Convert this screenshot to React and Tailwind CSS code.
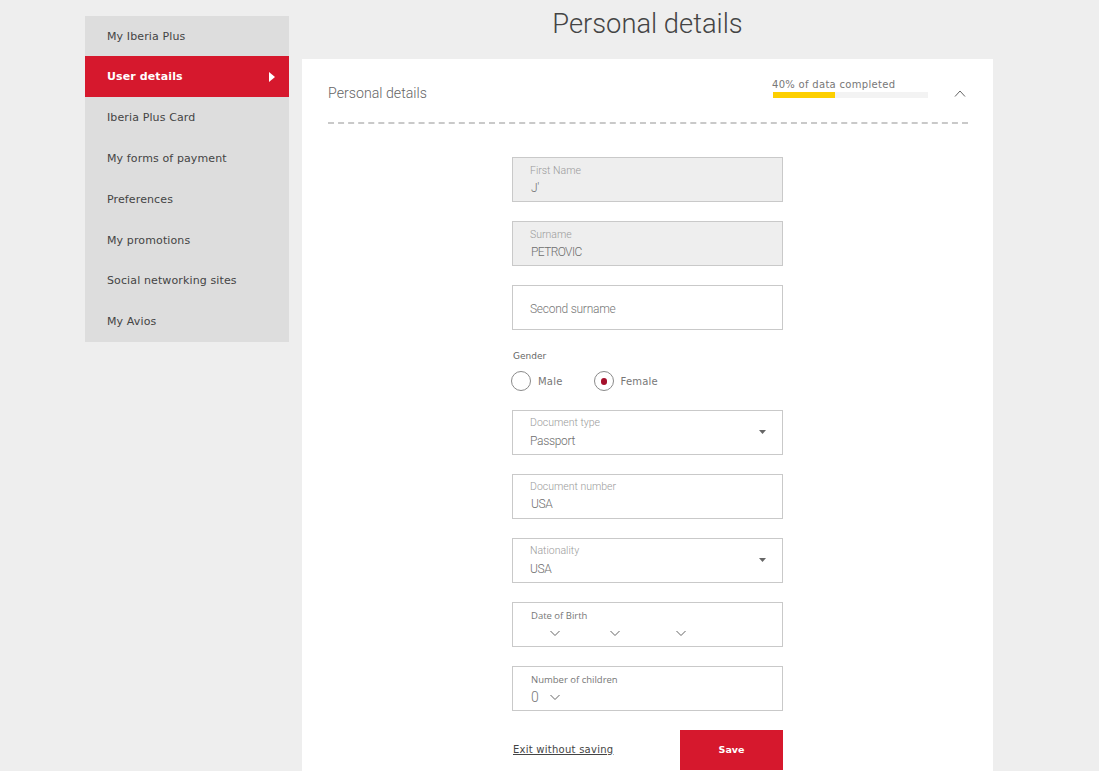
const sans = "font-['DejaVu_Sans',sans-serif]";
const open = "font-['Open_Sans',sans-serif]";
const light = "font-['Roboto',sans-serif] font-light";

const items = [
  ["My Iberia Plus", 40, false, "pt-[2px]"],
  ["User details", 41, true, "pt-[1px]"],
  ["Iberia Plus Card", 41, false, "pt-[1px]"],
  ["My forms of payment", 41, false, "pt-[1px]"],
  ["Preferences", 41, false, "pt-[1px]"],
  ["My promotions", 41, false, "pt-[1px]"],
  ["Social networking sites", 40, false, "pt-[1px]"],
  ["My Avios", 41, false, "pt-[1px]"],
];

function Chevron({ up, className = "" }) {
  return (
    <svg width="12" height="7" viewBox="0 0 12 7" fill="none" className={className}>
      <path d={up ? "M1 6.5 L6 1 L11 6.5" : "M1.5 1 L6 5.5 L10.5 1"} stroke="#666" strokeWidth="1" />
    </svg>
  );
}

function Caret() {
  return (
    <svg width="7" height="4" viewBox="0 0 7 4" className="absolute right-[16px] top-[19px]">
      <path d="M0 0 H7 L3.5 4 Z" fill="#666" />
    </svg>
  );
}

function Field({ label, value, disabled, caret, valueClass = "pl-[18px] tracking-[-0.4px]" }) {
  return (
    <div className={`relative h-[45px] border border-[#c9c9c9] ${disabled ? "bg-[#eeeeee] pt-[5px]" : "bg-white pt-[4px]"} ${light}`}>
      <div className="pl-[17px] text-[10.5px] leading-[16px] text-[#9a9a9a]">{label}</div>
      <div className={`${valueClass} ${caret ? "pt-[1px]" : ""} text-[12px] leading-[18px] text-[#6e6e6e]`}>{value}</div>
      {caret && <Caret />}
    </div>
  );
}

function Radio({ label, checked, className = "" }) {
  return (
    <div className={`flex items-center ${className}`}>
      <span className="flex h-[20px] w-[20px] items-center justify-center rounded-full border border-[#8a8a8a] bg-white">
        {checked && <span className="h-[7px] w-[6px] rounded-full bg-[#a5112c]" />}
      </span>
      <span className={`ml-[7px] pt-[1px] text-[10px] leading-[20px] tracking-[0.2px] text-[#777] ${sans}`}>{label}</span>
    </div>
  );
}

export default function App() {
  return (
    <div className="flex h-[771px] items-start overflow-hidden bg-[#eeeeee] pl-[85px]">
      <nav className="mt-[16px] w-[204px] bg-[#dddddd]">
        {items.map(([label, h, active, pad]) => (
          <div
            key={label}
            className={`flex items-center justify-between pl-[22px] pr-[14px] ${pad} text-[11px] tracking-[0.12px] ${sans} ${
              active ? "bg-[#d6182d] font-bold text-white" : "text-[#444]"
            }`}
            style={{ height: h }}
          >
            <span>{label}</span>
            {active && (
              <svg width="6" height="10" viewBox="0 0 6 10">
                <path d="M0 0 L6 5 L0 10 Z" fill="#fff" />
              </svg>
            )}
          </div>
        ))}
      </nav>

      <main className="ml-[13px] w-[691px]">
        <h1 className={`h-[59px] pt-[6px] text-center text-[27.3px] leading-[36px] text-[#444] ${light}`}>Personal details</h1>
        <section className="h-[712px] bg-white pl-[26px] pr-[25px]">
          <header className="flex h-[65px] items-center justify-between border-b-2 border-dashed border-[#c9c9c9]">
            <div className={`pt-[7px] text-[14.2px] text-[#666] ${light}`}>Personal details</div>
            <div className="flex items-center">
              <div className="w-[156px] pb-[4px]">
                <div className={`text-[10px] leading-[12px] tracking-[0.3px] text-[#777] ${sans}`}>40% of data completed</div>
                <div className="ml-[1px] mt-[1px] h-[6px] w-[155px] bg-[#f3f3f3]">
                  <div className="h-full w-[40%] bg-[#fdcf00]" />
                </div>
              </div>
              <Chevron up className="ml-[26px] mr-[2px] mt-[6px]" />
            </div>
          </header>

          <div className="ml-[184px] w-[271px] pt-[33px]">
            <div className="flex flex-col gap-[19px]">
              <Field label="First Name" value="J'" disabled />
              <Field label="Surname" value="PETROVIC" disabled valueClass="pl-[18px] tracking-[-0.6px]" />
              <div className={`flex h-[45px] items-center border border-[#c9c9c9] pl-[17px] pt-[2px] text-[12px] tracking-[-0.25px] text-[#777] ${light}`}>Second surname</div>
            </div>

            <div className={`ml-[1px] mt-[20px] text-[9px] leading-[12px] text-[#666] ${sans}`}>Gender</div>
            <div className="-ml-[1px] mt-[9px] flex h-[20px]">
              <Radio label="Male" />
              <Radio label="Female" checked className="ml-[31px]" />
            </div>

            <div className="mt-[19px] flex flex-col gap-[19px]">
              <Field label="Document type" value="Passport" caret valueClass="pl-[17px] tracking-[-0.3px]" />
              <Field label="Document number" value="USA" />
              <Field label="Nationality" value="USA" caret valueClass="pl-[17px] tracking-[-0.4px]" />
              <div className="relative h-[45px] border border-[#c9c9c9]">
                <div className={`pl-[18px] pt-[6px] text-[9.5px] leading-[14px] text-[#777] ${open}`}>Date of Birth</div>
                <div className="flex pl-[36px] pt-[7px]">
                  <Chevron />
                  <Chevron className="ml-[48px]" />
                  <Chevron className="ml-[54px]" />
                </div>
              </div>
              <div className="relative h-[45px] border border-[#c9c9c9]">
                <div className={`pl-[18px] pt-[6px] text-[9.5px] leading-[14px] text-[#777] ${open}`}>Number of children</div>
                <div className="flex items-center pl-[18px] pt-[1px]">
                  <span className={`w-[18px] text-[14px] leading-[18px] text-[#777] ${light}`}>0</span>
                  <Chevron />
                </div>
              </div>
            </div>

            <div className="mt-[19px] flex items-center justify-between">
              <span className={`ml-[1px] pb-[2px] text-[10px] tracking-[0.25px] text-[#444] underline ${sans}`}>Exit without saving</span>
              <button className={`h-[40px] w-[103px] bg-[#d6182d] text-[9.5px] font-bold text-white ${sans}`}>Save</button>
            </div>
          </div>
        </section>
      </main>
    </div>
  );
}
